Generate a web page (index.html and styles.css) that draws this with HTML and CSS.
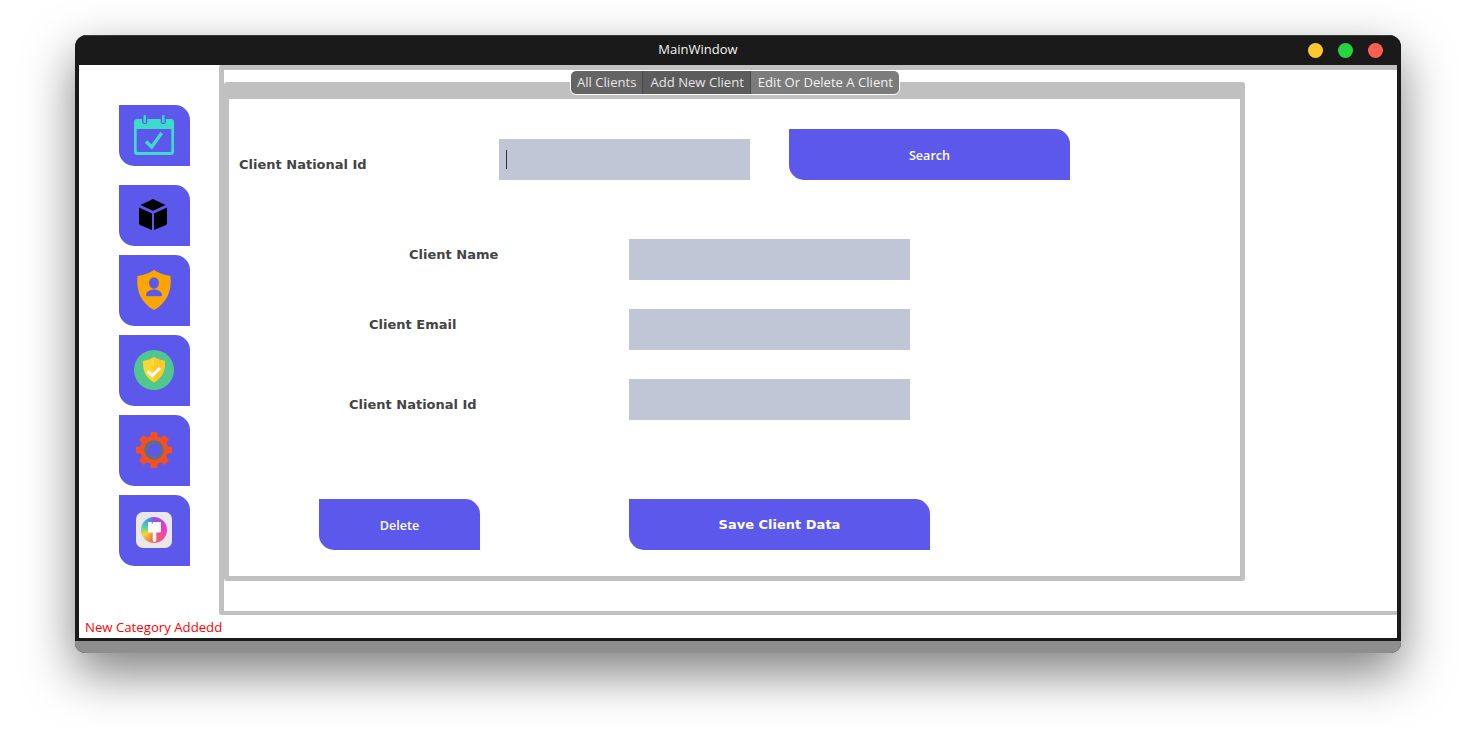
FILE: index.html
```html
<!DOCTYPE html>
<html lang="en">
<head>
<meta charset="utf-8">
<title>MainWindow</title>
<link rel="stylesheet" href="styles.css">
</head>
<body>
<div class="window">
  <header class="titlebar">
    <span class="title">MainWindow</span>
    <div class="lights">
      <span class="light yellow"></span>
      <span class="light green"></span>
      <span class="light red"></span>
    </div>
  </header>
  <div class="content">
    <div class="workspace">
      <nav class="sidebar">
        <button class="side-btn short first">
          <svg width="40" height="40" viewBox="0 0 40 40">
            <path fill="#3ddbc9" fill-rule="evenodd" d="M3 4h34a3 3 0 0 1 3 3v30a3 3 0 0 1-3 3H3a3 3 0 0 1-3-3V7a3 3 0 0 1 3-3zM2.700 14v22a1 1 0 0 0 1 1h32.600a1 1 0 0 0 1-1V14z"/>
            <rect x="8.200" y="-1" width="5" height="10" rx="2.500" fill="#5c58eb"/>
            <rect x="26.800" y="-1" width="5" height="10" rx="2.500" fill="#5c58eb"/>
            <rect x="9.500" y="0" width="2.400" height="8" rx="1.200" fill="#3ddbc9"/>
            <rect x="28.100" y="0" width="2.400" height="8" rx="1.200" fill="#3ddbc9"/>
            <path fill="none" stroke="#3ddbc9" stroke-width="3.400" d="M12 26.500l5.700 5.500 10-14"/>
          </svg>
        </button>
        <button class="side-btn short">
          <svg width="28" height="31" viewBox="1 1 28 31"><path d="M14 0l12.500 6-12.500 5.800L1.500 6z"/><path d="M0 8.500l13 6v16.500l-11.500-4.800A2 2 0 0 1 0 24.500z"/><path d="M28 8.500l-13 6v16.500l11.500-4.800a2 2 0 0 0 1.500-1.700z"/></svg>
        </button>
        <button class="side-btn">
          <svg width="34" height="40" viewBox="0 0 34 40"><path fill="#ffa500" d="M17 0c3.500 2.500 9 5 16.500 6 1.500 15-3.500 27-16.500 34C4 33-1 21 .5 6 8 5 13.500 2.500 17 0z"/><ellipse cx="17" cy="13" rx="5" ry="5.800" fill="#5c58eb"/><path fill="#5c58eb" d="M9 25c0-3 3.500-5.500 8-5.500s8 2.500 8 5.500c0 .8-.5 1.200-1.500 1.200h-13C9.500 26.200 9 25.800 9 25z"/></svg>
        </button>
        <button class="side-btn">
          <svg width="40" height="40" viewBox="0 0 40 40"><circle cx="20" cy="20" r="20" fill="#4fc78f"/><path fill="#fdd835" d="M20 7c3 2 6.500 3.300 11 4 .3 9.500-2.500 16.500-11 21.500C11.500 27.500 8.700 20.500 9 11c4.500-.7 8-2 11-4z"/><path fill="#ffc928" d="M20 7c3 2 6.500 3.300 11 4 .3 9.500-2.500 16.500-11 21.500z"/><path fill="none" stroke="#fff" stroke-width="3" d="M13.500 21.500l5 4 7.500-7.500"/></svg>
        </button>
        <button class="side-btn">
          <svg width="36" height="36" viewBox="0 0 36 36"><g fill="#f4511e"><rect x="14.500" y="0" width="7" height="36" rx="1"/><rect x="14.500" y="0" width="7" height="36" rx="1" transform="rotate(45 18 18)"/><rect x="14.500" y="0" width="7" height="36" rx="1" transform="rotate(90 18 18)"/><rect x="14.500" y="0" width="7" height="36" rx="1" transform="rotate(135 18 18)"/><circle cx="18" cy="18" r="14"/></g><circle cx="18" cy="18" r="8" fill="#5c58eb" stroke="#636b8a" stroke-width="3.500"/></svg>
        </button>
        <button class="side-btn">
          <span class="paint-tile">
            <span class="paint-disc">
              <svg class="brush" width="13" height="20" viewBox="0 0 13 20"><path fill="#fff" d="M0 0h3.500l.8 2 .8-2H13v9a1.500 1.500 0 0 1-1.500 1.500H8.300v7.700a1.800 1.800 0 0 1-3.600 0v-7.700H1.500A1.500 1.500 0 0 1 0 9z"/></svg>
            </span>
          </span>
        </button>
      </nav>
      <main class="main">
        <section class="tab-widget">
          <div class="tabs">
            <span class="tab">All Clients</span>
            <span class="tab second">Add New Client</span>
            <span class="tab active">Edit Or Delete A Client</span>
          </div>
          <div class="pane">
            <div class="search-row">
              <label class="label search-label">Client National Id</label>
              <div class="field search-field"><span class="caret"></span></div>
              <button class="btn search-btn">Search</button>
            </div>
            <div class="form-row row-name">
              <label class="label name-label">Client Name</label>
              <div class="field"></div>
            </div>
            <div class="form-row row-email">
              <label class="label email-label">Client Email</label>
              <div class="field"></div>
            </div>
            <div class="form-row row-id">
              <label class="label id-label">Client National Id</label>
              <div class="field"></div>
            </div>
            <div class="actions">
              <button class="btn delete-btn">Delete</button>
              <button class="btn save-btn">Save Client Data</button>
            </div>
          </div>
        </section>
      </main>
    </div>
    <footer class="status">New Category Addedd</footer>
  </div>
  <div class="ledge"></div>
</div>
</body>
</html>
```
FILE: styles.css
```css
* { box-sizing: border-box; }
html, body { margin: 0; height: 100%; background: #fff; overflow: hidden; }
body { padding-top: 35px; font-family: "Open Sans", sans-serif; }

.window {
  width: 1326px;
  height: 618px;
  margin: 0 auto;
  display: flex;
  flex-direction: column;
  border-radius: 12px 12px 10px 10px;
  background: #1a1a1a;
  box-shadow: 0 20px 50px rgba(0, 0, 0, 0.5);
  overflow: hidden;
}

.titlebar {
  height: 30px;
  flex: none;
  display: flex;
  align-items: center;
  justify-content: center;
  position: relative;
  padding: 0 80px 4px 0;
  border-top: 1px solid #3a3a3a;
  background: #1a1a1a;
}
.title { color: #f4f4f4; font-size: 13px; }
.lights { position: absolute; right: 18px; top: 7px; display: flex; gap: 15px; }
.light { width: 15px; height: 15px; border-radius: 50%; }
.yellow { background: #ffc72e; }
.green { background: #29d33f; }
.red { background: #ff5f52; }

.content {
  flex: none;
  height: 573px;
  margin: 0 4px;
  background: #fff;
  display: flex;
  flex-direction: column;
}
.workspace { height: 550px; display: flex; flex: none; }

.sidebar {
  width: 140px;
  flex: none;
  padding: 40px 0 0 40px;
  display: flex;
  flex-direction: column;
  gap: 9px;
}
.side-btn {
  width: 71px;
  height: 71px;
  flex: none;
  padding: 0 1px 1px 0;
  border: 0;
  background: #5c58eb;
  border-radius: 0 15px 0 15px;
  display: flex;
  align-items: center;
  justify-content: center;
}
.side-btn svg { overflow: visible; flex: none; }
.side-btn.short { height: 61px; }
.side-btn.first { margin-bottom: 10px; }

.paint-tile {
  width: 36px;
  height: 36px;
  border-radius: 7px;
  background: #e8e8ec;
  display: flex;
  align-items: center;
  justify-content: center;
}
.paint-disc {
  width: 26px;
  height: 26px;
  border-radius: 50%;
  background: conic-gradient(#9a4fe0 0deg, #e63ad0 80deg, #f2508a 140deg, #f4704a 190deg, #f6d23a 245deg, #5fd0a0 285deg, #35a8e8 325deg, #9a4fe0 360deg);
  display: flex;
  align-items: center;
  justify-content: center;
}
.brush { margin-top: 4px; }

.main {
  flex: 1;
  border: solid #c0c0c0;
  border-width: 5px 0 4px 5px;
  border-top-left-radius: 3px;
  border-bottom-left-radius: 3px;
}

.tab-widget { margin-top: 12px; width: 1021px; position: relative; }
.tabs {
  position: absolute;
  left: 347px;
  top: -11px;
  display: flex;
  height: 23px;
  outline: 1px solid #fff;
  border-radius: 5px;
  background: #606060;
  overflow: hidden;
  font-size: 13.1px;
  color: #e4e4e4;
}
.tab { padding: 0 6px 0 7px; line-height: 22px; border-right: 1px solid #484848; background: #646464; }
.tab:first-child { padding-left: 6px; }
.tab.second { background: #5c5c5c; }
.tab.active { background: #7c7c7c; color: #f2f2f2; border-right: 0; }

.pane {
  height: 499px;
  border: solid #c0c0c0;
  border-width: 17px 5px 5px;
  border-radius: 3px;
  background: #fff;
  padding: 30px 0 0 10px;
}

.label { font: bold 13px "DejaVu Sans", sans-serif; color: #444; white-space: nowrap; }
.field { background: #c0c6d5; height: 41px; width: 281px; flex: none; }

.search-row { display: flex; align-items: flex-end; height: 51px; }
.search-label { width: 260px; padding-bottom: 8px; }
.search-field { width: 251px; margin-right: 39px; display: flex; align-items: center; padding-left: 7px; }
.caret { width: 1px; height: 19px; background: #333; }

.btn {
  border: 0;
  padding: 0;
  height: 51px;
  color: #fff;
  background: #5c58eb;
  border-radius: 0 15px 0 15px;
}
.search-btn { width: 281px; padding-top: 2px; font: 600 12.6px "Open Sans", sans-serif; }
.delete-btn { width: 161px; margin-right: 149px; padding-top: 2px; font: 600 12.6px "Open Sans", sans-serif; }
.save-btn { width: 301px; font: bold 13px "DejaVu Sans", sans-serif; }

.form-row { display: flex; padding-left: 390px; position: relative; }
.form-row .label { position: absolute; }
.row-name { margin-top: 59px; }
.row-email { margin-top: 29px; }
.row-id { margin-top: 29px; }
.name-label { left: 170px; top: 8px; }
.email-label { left: 130px; top: 8px; }
.id-label { left: 110px; top: 18px; }

.actions { display: flex; margin: 79px 0 0 80px; }

.status {
  height: 23px;
  flex: none;
  padding: 4px 0 0 6px;
  font-size: 13.2px;
  line-height: 17px;
  color: #ff0000;
}
.ledge { height: 12px; margin-top: 3px; background: #8e8e8e; flex: none; }
```
